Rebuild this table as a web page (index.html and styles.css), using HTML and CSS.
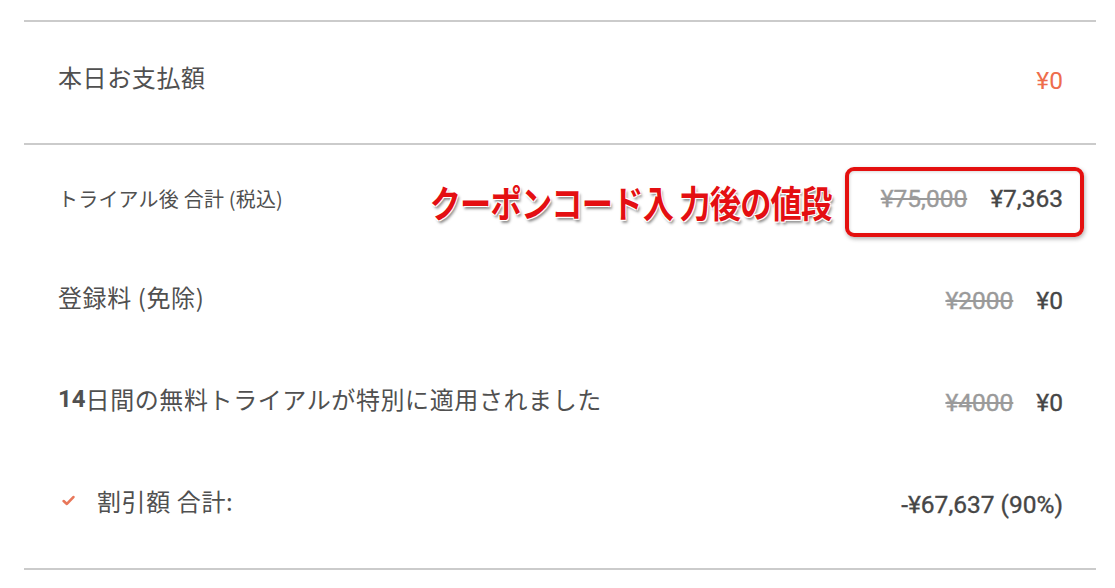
FILE: index.html
```html
<!DOCTYPE html>
<html lang="ja">
<head>
<meta charset="utf-8">
<title>お支払い</title>
<link rel="stylesheet" href="styles.css">
</head>
<body>
<div class="summary">
  <div class="today">
    <div class="label">本日お支払額</div>
    <div class="value accent">¥0</div>
  </div>
  <div class="details">
    <div class="row">
      <div class="label small">トライアル後 合計 (税込)</div>
      <div class="value">
        <span class="strike">¥75,000</span><span>¥7,363</span>
        <span class="note">クーポンコード入 力後の値段</span>
        <span class="highlight"></span>
      </div>
    </div>
    <div class="row">
      <div class="label">登録料 (免除)</div>
      <div class="value"><span class="strike">¥2000</span><span>¥0</span></div>
    </div>
    <div class="row">
      <div class="label"><b class="num">14</b>日間の無料トライアルが特別に適用されました</div>
      <div class="value"><span class="strike">¥4000</span><span>¥0</span></div>
    </div>
    <div class="row">
      <div class="label check">
        <svg class="tick" viewBox="0 0 12 10" width="13" height="11"><path d="M1.5 5.5 L4.5 8.2 L10.5 1.8" fill="none" stroke="#e8775a" stroke-width="2.4" stroke-linecap="round" stroke-linejoin="round"/></svg>
        <span>割引額 合計:</span>
      </div>
      <div class="value"><span>-¥67,637 (90%)</span></div>
    </div>
  </div>
</div>
</body>
</html>
```
FILE: styles.css
```css
html, body {
  margin: 0;
  padding: 0;
  background: #fff;
}
body {
  padding-top: 20px;
  font-family: Roboto, "Noto Sans CJK JP", sans-serif;
  color: #4a4a4a;
}
.summary {
  margin-left: 24px;
  width: 1072px;
  border-top: 2px solid #cbcbcb;
  border-bottom: 2px solid #cbcbcb;
}
.today {
  height: 121px;
  box-sizing: border-box;
  padding: 0 33px 5px 34px;
  display: flex;
  align-items: center;
  justify-content: space-between;
}
.details {
  border-top: 2px solid #cbcbcb;
  padding: 2px 0 13px;
}
.row {
  height: 102px;
  padding: 0 33px 0 34px;
  display: flex;
  align-items: center;
  justify-content: space-between;
}
.label {
  font-family: "Noto Sans CJK JP", sans-serif;
  font-size: 24px;
  font-weight: 400;
  letter-spacing: 0.6px;
  color: #505050;
  display: flex;
  align-items: center;
  margin-bottom: 7px;
}
.label.small {
  font-size: 20px;
  letter-spacing: 0.2px;
  margin-bottom: 0;
}
.num {
  font-family: Roboto, sans-serif;
  font-weight: 700;
  letter-spacing: 0;
}
.check .tick {
  margin: 0 22px 0 4px;
}
.value {
  position: relative;
  font-family: Roboto, sans-serif;
  font-size: 24.5px;
  font-weight: 400;
  color: #464646;
  -webkit-text-stroke: 0.35px currentColor;
  display: flex;
  align-items: center;
  gap: 23px;
}
.value.accent {
  color: #ee6d4c;
  -webkit-text-stroke: 0;
}
.strike {
  color: #9a9a9a;
  text-decoration: line-through;
  text-decoration-thickness: 2px;
}
.highlight {
  position: absolute;
  left: -36px;
  right: -21px;
  top: -17px;
  bottom: -24px;
  border: 4px solid #e4100f;
  border-radius: 9px;
  box-shadow: 1px 2px 4px rgba(0,0,0,0.3), inset 1px 1px 3px rgba(0,0,0,0.15);
}
.note {
  position: absolute;
  right: 232px;
  top: 0;
  line-height: 1;
  white-space: nowrap;
  font-family: "Noto Sans CJK JP", sans-serif;
  font-weight: 700;
  font-size: 37px;
  letter-spacing: -1px;
  color: #e40f12;
  -webkit-text-stroke: 0;
  transform: scaleX(0.845);
  transform-origin: right center;
  text-shadow:
    -1px -1px 0 #fff, 1px -1px 0 #fff, -1px 1px 0 #fff, 1px 1px 0 #fff,
    2px 3px 3px rgba(0,0,0,0.45);
}
```
